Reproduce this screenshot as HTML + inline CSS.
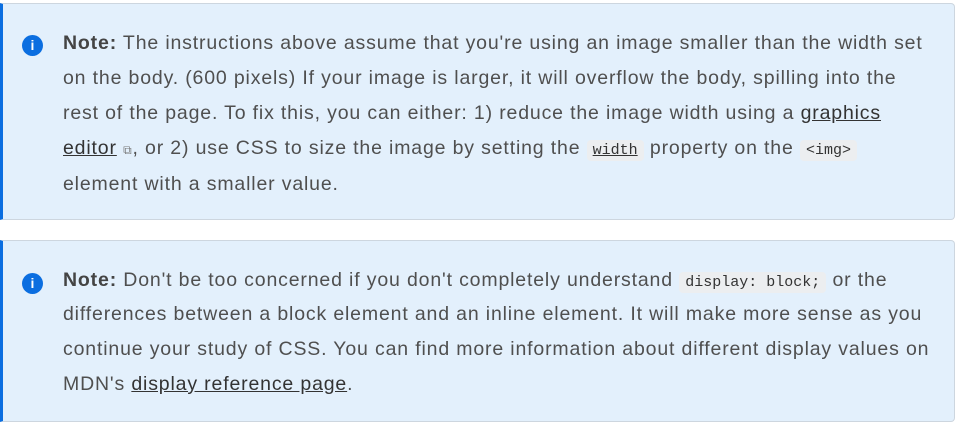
<!DOCTYPE html>
<html><head><meta charset="utf-8"><style>
body{margin:0;background:#fff;width:971px;height:422px;overflow:hidden;font-family:"Liberation Sans",sans-serif;}
.box{position:absolute;left:0;width:955px;background:#e3f0fc;border:1px solid #cdd6df;border-left:3px solid #0b6ee0;border-radius:0 4px 4px 0;box-sizing:border-box;}
.line{position:absolute;left:60px;white-space:nowrap;font-size:19.5px;color:#4f4f4f;line-height:24px;letter-spacing:0.84px;}
.ic{position:absolute;left:19px;width:21px;height:21px;border-radius:50%;background:#0b6ee0;color:#fff;font:bold 14px/21px "Liberation Sans",sans-serif;text-align:center;}
b{color:#444;}
a{color:#333;text-decoration:underline;}
code{font-family:"Liberation Mono",monospace;font-size:15px;background:#eceef0;padding:2px 6px;border-radius:4px;color:#333;letter-spacing:0;}
.ext{font-size:12px;color:#777;}
</style></head><body>
<div class="box" style="top:3px;height:217px;">
<div class="ic" style="top:31px;">i</div>
<div class="line" style="top:27px;"><b>Note:</b> The instructions above assume that you're using an image smaller than the width set</div>
<div class="line" style="top:62px;">on the body. (600 pixels) If your image is larger, it will overflow the body, spilling into the</div>
<div class="line" style="top:97px;">rest of the page. To fix this, you can either: 1) reduce the image width using a <a>graphics</a></div>
<div class="line" style="top:132px;"><a>editor</a> <span class="ext">⧉</span>, or 2) use CSS to size the image by setting the <code><u>width</u></code> property on the <code>&lt;img&gt;</code></div>
<div class="line" style="top:168px;">element with a smaller value.</div>
</div>
<div class="box" style="top:240px;height:182px;">
<div class="ic" style="top:32px;">i</div>
<div class="line" style="top:27px;"><b>Note:</b> Don't be too concerned if you don't completely understand <code>display: block;</code> or the</div>
<div class="line" style="top:61px;">differences between a block element and an inline element. It will make more sense as you</div>
<div class="line" style="top:96px;">continue your study of CSS. You can find more information about different display values on</div>
<div class="line" style="top:131px;">MDN's <a>display reference page</a>.</div>
</div>
</body></html>
